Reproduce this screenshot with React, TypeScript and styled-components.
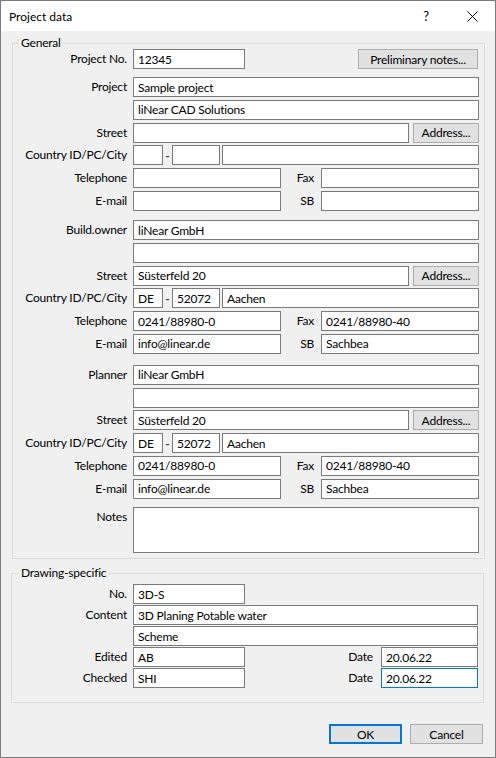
import { useEffect, useRef } from 'react';
import styled, { createGlobalStyle } from 'styled-components';

const GlobalStyle = createGlobalStyle`
  html, body {
    margin: 0;
    padding: 0;
    background: #f0f0f0;
  }
  body {
    font-family: Lato, "Noto Sans", "Liberation Sans", sans-serif;
    font-size: 12px;
    letter-spacing: -0.2px;
    color: #000;
  }
  * {
    box-sizing: border-box;
  }
`;

const Window = styled.div`
  width: 496px;
  height: 758px;
  border: 1px solid #7a7a7a;
  background: #f0f0f0;
  display: flex;
  flex-direction: column;
`;

const TitleBar = styled.div`
  height: 30px;
  flex-shrink: 0;
  background: #fff;
  display: flex;
  align-items: center;
`;

const Title = styled.div`
  flex: 1;
  padding-left: 8px;
  letter-spacing: 0;
`;

const TitleButton = styled.div`
  width: 46px;
  height: 30px;
  display: flex;
  align-items: center;
  justify-content: center;
  font-size: 13px;
`;

const Body = styled.div`
  padding: 6px 10px 0 11px;
  display: flex;
  flex-direction: column;
`;

const Group = styled.fieldset<{ $shift?: boolean; $top?: number; $bottom: number }>`
  margin: ${(p) => (p.$shift ? '8px 1px 0 -1px' : '0')};
  min-width: 0;
  border: 1px solid #dcdcdc;
  padding: ${(p) => p.$top ?? 0}px 5px ${(p) => p.$bottom}px ${(p) => (p.$shift ? 1 : 0)}px;
  display: flex;
  flex-direction: column;
`;

const Legend = styled.legend`
  margin-left: 6px;
  padding: 0 2px;
  line-height: 12px;
`;

const Block = styled.div<{ $gap: number; $space?: number }>`
  display: flex;
  flex-direction: column;
  gap: ${(p) => p.$gap}px;
  margin-top: ${(p) => p.$space ?? 0}px;
`;

const Row = styled.div`
  display: grid;
  grid-template-columns: 114px 1fr;
  column-gap: 6px;
`;

const Label = styled.div<{ $top?: boolean }>`
  text-align: right;
  white-space: nowrap;
  line-height: 20px;
  align-self: ${(p) => (p.$top ? 'start' : 'center')};
`;

const Field = styled.div<{ $gap?: number; $lead?: number }>`
  display: flex;
  align-items: center;
  flex: 1;
  gap: ${(p) => p.$gap ?? 0}px;
  padding-left: ${(p) => p.$lead ?? 0}px;
  min-width: 0;
`;

const TextBox = styled.input<{ $w?: number; $focus?: boolean }>`
  height: 20px;
  width: ${(p) => (p.$w ? `${p.$w}px` : 'auto')};
  flex: ${(p) => (p.$w ? 'none' : '1 1 0')};
  min-width: 0;
  margin: 0;
  padding: 0 4px;
  border: 1px solid ${(p) => (p.$focus ? '#0078d7' : '#7a7a7a')};
  border-radius: 0;
  background: #fff;
  font: inherit;
  letter-spacing: inherit;
  color: #000;
  caret-color: #000;
  outline: none;
`;

const NoteBox = styled.textarea`
  height: 46px;
  margin: 0;
  padding: 2px 4px;
  border: 1px solid #7a7a7a;
  border-radius: 0;
  background: #fff;
  font: inherit;
  resize: none;
  outline: none;
`;

const Button = styled.button<{ $w: number; $default?: boolean; $push?: boolean }>`
  width: ${(p) => p.$w}px;
  height: 20px;
  flex: none;
  margin: 0 ${(p) => (p.$push ? '1px' : '0')} 0 ${(p) => (p.$push ? 'auto' : '0')};
  padding: 0;
  background: #e1e1e1;
  border: ${(p) => (p.$default ? '2px solid #0078d7' : '1px solid #adadad')};
  border-radius: 0;
  font: inherit;
  letter-spacing: inherit;
  color: #000;
`;

const Dash = styled.span`
  width: 9px;
  height: 20px;
  flex: none;
  padding-top: 2px;
  overflow: visible;
  text-align: center;
  font-weight: 700;
  line-height: 18px;
  color: #444;
`;

const SideLabel = styled.span<{ $w: number; $pad: number }>`
  width: ${(p) => p.$w}px;
  flex: none;
  padding-right: ${(p) => p.$pad}px;
  text-align: right;
  line-height: 20px;
`;

const Footer = styled.div`
  display: flex;
  justify-content: flex-end;
  gap: 8px;
  margin: 21px 2px 0 0;
`;

const CloseIcon = () => (
  <svg width="11" height="11" viewBox="0 0 11 11">
    <path d="M0.5 0.5 L10.5 10.5 M10.5 0.5 L0.5 10.5" stroke="#000" strokeWidth="1" fill="none" />
  </svg>
);

type Contact = {
  street: string;
  country: string;
  pc: string;
  city: string;
  phone: string;
  fax: string;
  mail: string;
  sb: string;
};

const blank: Contact = { street: '', country: '', pc: '', city: '', phone: '', fax: '', mail: '', sb: '' };

const linear: Contact = {
  street: 'Süsterfeld 20',
  country: 'DE',
  pc: '52072',
  city: 'Aachen',
  phone: '0241/88980-0',
  fax: '0241/88980-40',
  mail: 'info@linear.de',
  sb: 'Sachbea',
};

const Line = ({ label, value }: { label?: string; value: string }) => (
  <Row>
    <Label>{label}</Label>
    <Field>
      <TextBox readOnly value={value} />
    </Field>
  </Row>
);

const AddressRows = ({ c }: { c: Contact }) => (
  <>
    <Row>
      <Label>Street</Label>
      <Field $gap={4}>
        <TextBox readOnly value={c.street} />
        <Button $w={66}>Address...</Button>
      </Field>
    </Row>
    <Row>
      <Label>Country ID/PC/City</Label>
      <Field>
        <TextBox $w={30} readOnly value={c.country} />
        <Dash>-</Dash>
        <TextBox $w={48} readOnly value={c.pc} />
        <Field $lead={2}>
          <TextBox readOnly value={c.city} />
        </Field>
      </Field>
    </Row>
    <Row>
      <Label>Telephone</Label>
      <Field>
        <TextBox $w={148} readOnly value={c.phone} />
        <SideLabel $w={40} $pad={7}>Fax</SideLabel>
        <TextBox readOnly value={c.fax} />
      </Field>
    </Row>
    <Row>
      <Label>E-mail</Label>
      <Field>
        <TextBox $w={148} readOnly value={c.mail} />
        <SideLabel $w={40} $pad={7}>SB</SideLabel>
        <TextBox readOnly value={c.sb} />
      </Field>
    </Row>
  </>
);

const App = () => {
  const dateRef = useRef<HTMLInputElement>(null);

  useEffect(() => {
    const el = dateRef.current;
    if (el) {
      el.focus();
      el.setSelectionRange(el.value.length, el.value.length);
    }
  }, []);

  return (
    <>
      <GlobalStyle />
      <Window>
        <TitleBar>
          <Title>Project data</Title>
          <TitleButton>?</TitleButton>
          <TitleButton>
            <CloseIcon />
          </TitleButton>
        </TitleBar>
        <Body>
          <Group $bottom={5}>
            <Legend>General</Legend>
            <Row>
              <Label>Project No.</Label>
              <Field>
                <TextBox $w={112} readOnly value="12345" />
                <Button $w={120} $push>
                  Preliminary notes...
                </Button>
              </Field>
            </Row>
            <Block $gap={2.75} $space={8}>
              <Line label="Project" value="Sample project" />
              <Line value="liNear CAD Solutions" />
              <AddressRows c={blank} />
            </Block>
            <Block $gap={2.75} $space={9.25}>
              <Line label="Build.owner" value="liNear GmbH" />
              <Line value="" />
              <AddressRows c={linear} />
            </Block>
            <Block $gap={2.75} $space={11}>
              <Line label="Planner" value="liNear GmbH" />
              <Line value="" />
              <AddressRows c={linear} />
            </Block>
            <Block $gap={0} $space={8.5}>
              <Row>
                <Label $top>Notes</Label>
                <NoteBox readOnly value="" />
              </Row>
            </Block>
          </Group>

          <Group $shift $top={5} $bottom={14}>
            <Legend>Drawing-specific</Legend>
            <Block $gap={1}>
              <Row>
                <Label>No.</Label>
                <Field>
                  <TextBox $w={112} readOnly value="3D-S" />
                </Field>
              </Row>
              <Line label="Content" value="3D Planing Potable water" />
              <Line value="Scheme" />
              <Row>
                <Label>Edited</Label>
                <Field>
                  <TextBox $w={112} readOnly value="AB" />
                  <SideLabel $w={136} $pad={8}>Date</SideLabel>
                  <TextBox readOnly value="20.06.22" />
                </Field>
              </Row>
              <Row>
                <Label>Checked</Label>
                <Field>
                  <TextBox $w={112} readOnly value="SHI" />
                  <SideLabel $w={136} $pad={8}>Date</SideLabel>
                  <TextBox ref={dateRef} $focus defaultValue="20.06.22" />
                </Field>
              </Row>
            </Block>
          </Group>

          <Footer>
            <Button $w={73} $default>OK</Button>
            <Button $w={73}>Cancel</Button>
          </Footer>
        </Body>
      </Window>
    </>
  );
};

export default App;
